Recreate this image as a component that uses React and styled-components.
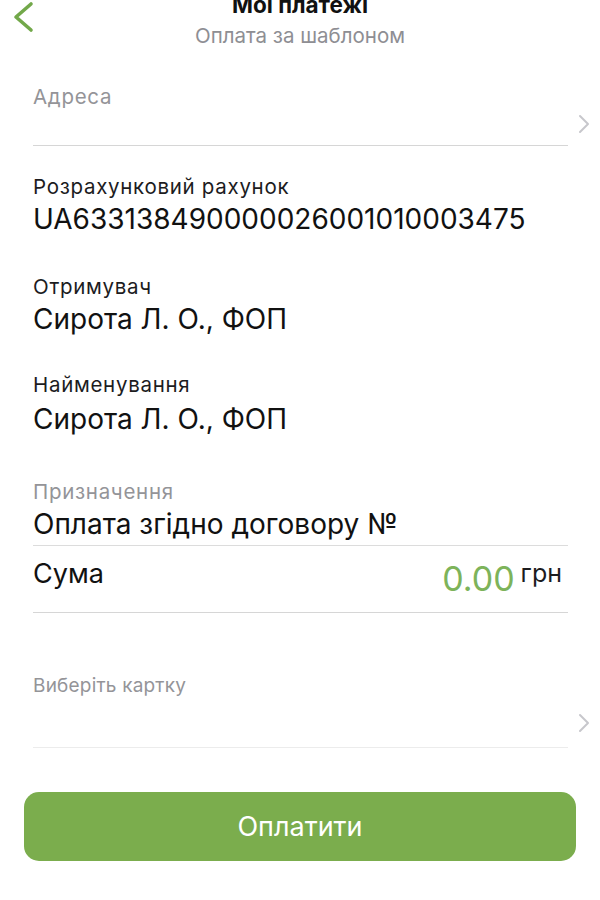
import React from 'react';
import styled, { createGlobalStyle } from 'styled-components';

const GlobalStyle = createGlobalStyle`
  html, body {
    margin: 0;
    padding: 0;
    background: #fff;
  }
  body {
    font-family: Inter, Roboto, "Noto Sans", "Liberation Sans", sans-serif;
    color: #1c1c1e;
  }
`;

const Screen = styled.div`
  width: 600px;
  height: 900px;
  overflow: hidden;
  background: #fff;
`;

const Header = styled.div`
  position: relative;
  display: flex;
  flex-direction: column;
  align-items: center;
`;

const BackButton = styled.div`
  position: absolute;
  left: 11px;
  top: 0;
  width: 26px;
  height: 34px;
`;

const Title = styled.div`
  margin-top: -8px;
  font-size: 22.5px;
  font-weight: 700;
  line-height: 26px;
  color: #111;
`;

const Subtitle = styled.div`
  margin-top: 6.5px;
  font-size: 20.5px;
  line-height: 22px;
  color: #8e8e93;
`;

const Form = styled.div`
  padding-left: 33px;
  display: flex;
  flex-direction: column;
`;

const Row = styled.div`
  display: flex;
  align-items: stretch;
`;

const Content = styled.div`
  flex: 1;
  margin-right: ${p => (p.$chevron ? '0' : '32px')};
  border-bottom: ${p => (p.$line ? `1px solid ${p.$line}` : 'none')};
  padding-top: ${p => p.$top || 0}px;
  padding-bottom: ${p => p.$bottom || 0}px;
`;

const ChevronBox = styled.div`
  width: 32px;
  display: flex;
  align-items: flex-end;
  justify-content: center;
  padding-bottom: ${p => p.$bottom || 12}px;
`;

const Label = styled.div`
  font-size: ${p => p.$size || 20.5}px;
  letter-spacing: ${p => p.$spacing ?? 0.7}px;
  line-height: 24px;
  color: ${p => (p.$muted ? '#949498' : '#1c1c1e')};
`;

const Value = styled.div`
  font-size: 28px;
  line-height: 34px;
  margin-top: ${p => p.$gap || 3}px;
  color: #111;
  white-space: nowrap;
`;

const SumLine = styled.div`
  display: flex;
  align-items: flex-start;
  justify-content: space-between;
`;

const SumLabel = styled.div`
  font-size: 27px;
  line-height: 34px;
  color: #111;
`;

const Amount = styled.div`
  display: flex;
  align-items: flex-start;
  gap: 6px;
  margin-top: 2px;
  margin-right: 6px;
`;

const AmountValue = styled.span`
  font-size: 34px;
  line-height: 40px;
  color: #7db35a;
`;

const Currency = styled.span`
  font-size: 25px;
  line-height: 28px;
  color: #1c1c1e;
`;

const PayButton = styled.button`
  display: block;
  margin: 44px 24px 0;
  width: 552px;
  height: 69px;
  border: none;
  border-radius: 15px;
  background: #7bad4d;
  color: #fff;
  font-family: inherit;
  font-size: 27px;
  cursor: pointer;
`;

const Chevron = ({ color = '#c7c7cc' }) => (
  <svg width="12" height="20" viewBox="0 0 12 20" fill="none">
    <polyline points="2,2 10,10 2,18" stroke={color} strokeWidth="2" strokeLinecap="round" strokeLinejoin="round" />
  </svg>
);

const Back = () => (
  <svg width="26" height="34" viewBox="0 0 26 34" fill="none">
    <polyline points="20,4 5,17 20,30" stroke="#72a84a" strokeWidth="3.6" strokeLinecap="round" strokeLinejoin="round" />
  </svg>
);

export default function App() {
  return (
    <Screen>
      <GlobalStyle />
      <Header>
        <BackButton><Back /></BackButton>
        <Title>Мої платежі</Title>
        <Subtitle>Оплата за шаблоном</Subtitle>
      </Header>

      <Form>
        <Row>
          <Content $chevron $line="#d6d6d6" $top={38} $bottom={36}>
            <Label $muted>Адреса</Label>
          </Content>
          <ChevronBox $bottom={12}><Chevron /></ChevronBox>
        </Row>

        <Content $top={29}>
          <Label>Розрахунковий рахунок</Label>
          <Value $gap={3.5}>UA633138490000026001010003475</Value>
        </Content>

        <Content $top={39}>
          <Label>Отримувач</Label>
          <Value $gap={3}>Сирота Л. О., ФОП</Value>
        </Content>

        <Content $top={37}>
          <Label>Найменування</Label>
          <Value $gap={5}>Сирота Л. О., ФОП</Value>
        </Content>

        <Content $top={44} $line="#dcdcdc" $bottom={4}>
          <Label $muted>Призначення</Label>
          <Value $gap={3}>Оплата згідно договору №</Value>
        </Content>

        <Content $top={11} $line="#d6d6d6" $bottom={13}>
          <SumLine>
            <SumLabel>Сума</SumLabel>
            <Amount>
              <AmountValue>0.00</AmountValue>
              <Currency>грн</Currency>
            </Amount>
          </SumLine>
        </Content>

        <Row>
          <Content $chevron $line="#ececec" $top={61} $bottom={49}>
            <Label $muted $size={19} $spacing={0.2}>Виберіть картку</Label>
          </Content>
          <ChevronBox $bottom={15}><Chevron /></ChevronBox>
        </Row>
      </Form>

      <PayButton>Оплатити</PayButton>
    </Screen>
  );
}
